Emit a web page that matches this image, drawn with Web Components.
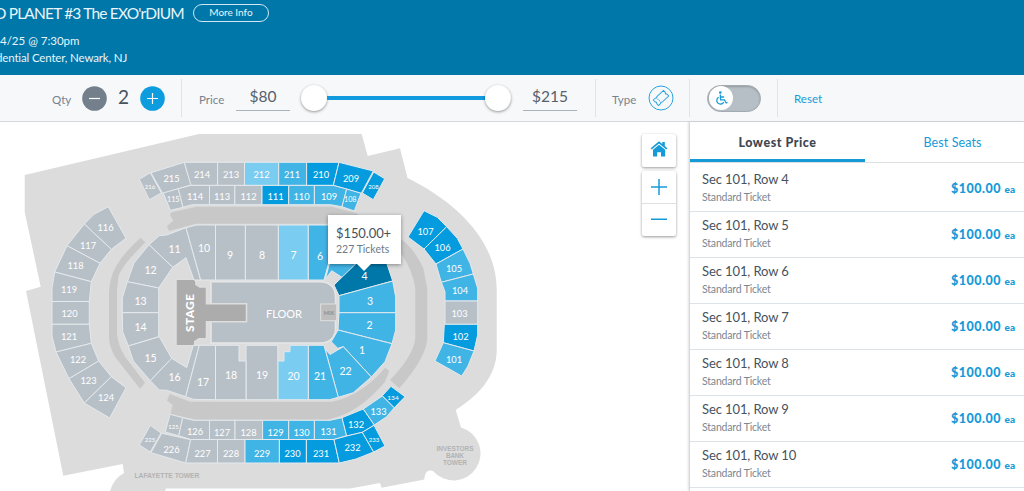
<!DOCTYPE html>
<html lang="en">
<head>
<meta charset="utf-8">
<title>Tickets</title>
<style>
	html, body {
		margin: 0;
		height: 100%;
		overflow: hidden;
		background: #fff;
		font-family: Lato, "Open Sans", sans-serif;
		color: #47525d;
	}
</style>
</head>
<body>
<ticket-page></ticket-page>

<script>
const define = (name, html, setup) => {
	const template = document.createElement('template');
	template.innerHTML = html;
	window.customElements.define(name, class extends HTMLElement {
		constructor() {
			super();
			this.attachShadow({ mode: 'open' });
			this.shadowRoot.appendChild(template.content.cloneNode(true));
		}
		connectedCallback() {
			if (setup) setup.call(this, this.shadowRoot);
		}
	});
};

define('event-header', `
	<style>
		:host {
			display: block;
			height: 75px;
			background: #0077a9;
			color: #e9f5fb;
			overflow: hidden;
			white-space: nowrap;
		}
		.title {
			display: flex;
			align-items: center;
			height: 18px;
			padding-top: 4px;
			margin-left: -6px;
			font-size: 15.5px;
			letter-spacing: -0.82px;
		}
		.more {
			box-sizing: border-box;
			width: 76px;
			height: 18px;
			margin-left: 9px;
			border: 1px solid #cfe8f4;
			border-radius: 9px;
			font-size: 10px;
			line-height: 15px;
			letter-spacing: 0;
			text-align: center;
		}
		.line {
			font-size: 11.5px;
			line-height: 17px;
		}
		.when { margin-top: 10px; }
		.where {
			margin-left: -4px;
			letter-spacing: -0.15px;
		}
	</style>
	<div class="title"><slot name="title"></slot><span class="more">More Info</span></div>
	<div class="line when"><slot name="when"></slot></div>
	<div class="line where"><slot name="where"></slot></div>
`);

define('filter-bar', `
	<style>
		:host {
			display: grid;
			grid-template-columns: 182px 414px 94px 88px 1fr;
			box-sizing: border-box;
			height: 47px;
			padding: 4px 0;
			background: #f6f8fa;
			border-bottom: 1px solid #d6dadd;
			color: #76838f;
			font-size: 11.5px;
		}
		.cell {
			display: flex;
			align-items: center;
			box-sizing: border-box;
			border-right: 1px solid #e0e4e7;
		}
		.cell:last-child { border: 0; }
		.label { padding-top: 3px; }
		.qty { padding-left: 52px; }
		.qty svg { display: block; }
		.count {
			width: 33px;
			color: #47525d;
			font-size: 19px;
			line-height: 22px;
			padding-bottom: 2px;
			text-align: center;
		}
		.price { padding-left: 17px; }
		.amount {
			box-sizing: border-box;
			width: 54px;
			height: 26px;
			border-bottom: 1px solid #a9b3bb;
			color: #56616c;
			font-size: 15.5px;
			line-height: 23px;
			text-align: center;
		}
		.slider {
			display: flex;
			align-items: center;
			width: 210px;
			margin: 0 12px 0 11px;
		}
		.knob {
			flex: none;
			width: 26px;
			height: 26px;
			border-radius: 50%;
			background: #fff;
			box-shadow: 0 1px 3px rgba(0,0,0,0.4);
		}
		.track {
			flex: 1;
			height: 4px;
			background: #119ade;
		}
		.type { padding-left: 16px; }
		.switch {
			display: flex;
			align-items: center;
			box-sizing: border-box;
			width: 54px;
			height: 27px;
			margin-left: 17px;
			padding: 1px;
			border: 1px solid #a3abb2;
			border-radius: 14px;
			background: #b7bfc6;
			box-shadow: inset 0 1px 2px rgba(0,0,0,0.2);
		}
		.thumb {
			width: 24px;
			height: 24px;
			border-radius: 50%;
			background: #fff;
		}
		.reset {
			padding-left: 16px;
			color: #169bd8;
		}
	</style>
	<div class="cell qty">
		<span class="label" style="width:30px">Qty</span>
		<svg width="25" height="25" viewBox="0 0 25 25"><circle cx="12.5" cy="12.5" r="12.3" fill="#73808b"/><path d="M7 12.5h11" stroke="#fff" stroke-width="1.2"/></svg>
		<span class="count">2</span>
		<svg width="25" height="25" viewBox="0 0 25 25"><circle cx="12.5" cy="12.5" r="12.3" fill="#0d9cde"/><path d="M7 12.5h11M12.5 7v11" stroke="#fff" stroke-width="1.2"/></svg>
	</div>
	<div class="cell price">
		<span class="label" style="width:37px">Price</span>
		<span class="amount">$80</span>
		<div class="slider"><div class="knob"></div><div class="track"></div><div class="knob"></div></div>
		<span class="amount">$215</span>
	</div>
	<div class="cell type">
		<span class="label" style="width:36px">Type</span>
		<svg width="26" height="26" viewBox="0 0 26 26" fill="none" stroke="#2ba3de">
			<circle cx="13" cy="13" r="12"/>
			<path transform="rotate(-43 13 13)" d="M6 9.200h3q.9 1.400 1.800 0H20v2.400q-1.400 1.400 0 2.800v2.400h-9.200q-.9-1.400-1.800 0H6v-2.400q1.400-1.400 0-2.800z"/>
			<path transform="rotate(-43 13 13)" d="M9.900 11.400v3.500" stroke-dasharray="1 1"/>
		</svg>
	</div>
	<div class="cell">
		<div class="switch"><div class="thumb">
			<svg width="24" height="24" viewBox="0 0 24 24" fill="none" stroke="#189bd8" stroke-width="1.300">
				<circle cx="11.300" cy="6.500" r=".7" fill="#189bd8"/>
				<path d="M11.300 8.500l.3 5.300h3.800l1.800 3.200 1.300-.6M11.600 11h3.500M9.700 11.300a3.600 3.600 0 1 0 5 4.600"/>
			</svg>
		</div></div>
	</div>
	<div class="cell reset">Reset</div>
`);

// shade -> fill
const shades = {
	n: '#b8c0c7',
	l: '#7accf0',
	m: '#41b4e6',
	d: '#049cde',
	x: '#0077a9'
};

// label, shade, polygon, label x, label y, font size
const sections = [
	['116', 'n', '108.3,206.7 126,238.3 111.3,249.3 84.3,224 94,214.3', 105.5, 227.500],
	['117', 'n', '84.3,224 111.3,249.3 100,263.3 67,245.7', 88, 245],
	['118', 'n', '67,245.7 100,263.3 91.3,281.7 54.7,272', 75.500, 265.500],
	['119', 'n', '54.7,272 91.3,281.7 89.3,301.5 52,301.5 52,288', 69, 289],
	['120', 'n', '52,301.5 89.3,301.5 89.3,324.3 52,324.3', 69.500, 313],
	['121', 'n', '52,324.3 89.3,324.3 91.3,343.3 56,352 52,336', 69, 336.500],
	['122', 'n', '56,352 91.3,343.3 98.7,361 69,378.7', 78, 359.500],
	['123', 'n', '69,378.7 98.7,361 111.3,376.7 84.3,403', 88.500, 380.500],
	['124', 'n', '84.3,403 111.3,376.7 126,387.7 109.7,418', 106, 397.500],

	['216', 'n', '139.3,179.3 150.3,172.7 161.3,193 149.3,199.7', 150, 186.500, 6],
	['215', 'n', '151,172.7 184.3,162.3 191,185 162.7,193.3', 171.500, 178.500],
	['214', 'n', '184.3,162.3 217.6,162.3 217.6,185.4 191,185.4', 202, 174],
	['213', 'n', '217.6,162.3 244.5,162.3 244.5,185.4 217.6,185.4', 231, 174.500],
	['212', 'l', '244.5,162.3 278.7,162.3 278.7,185.4 244.5,185.4', 261.500, 174.500],
	['211', 'm', '278.7,162.3 306.6,162.3 306.6,185.4 278.7,185.4', 292, 174.500],
	['210', 'd', '306.6,162.3 339,162.3 333.3,185.4 306.6,185.4', 321, 174],
	['209', 'd', '339,162.3 373.3,171 361.3,193.3 333.3,185.4', 351, 178.500],
	['208', 'd', '373.7,172 384.7,178.7 373.3,199.7 362.3,193', 373.500, 186.500, 6],
	['115', 'n', '163.3,193 178.3,188.7 183,207.3 170.3,210.3', 173.300, 199.500, 7.200],
	['114', 'n', '178.3,188.7 190.7,185.4 209.5,185.4 209.5,204.7 191.7,204.7 183,207.3', 195, 196],
	['113', 'n', '209.5,185.4 234.8,185.4 234.8,204.7 209.5,204.7', 222, 196],
	['112', 'n', '234.8,185.4 262,185.4 262,204.7 234.8,204.7', 248.500, 196],
	['111', 'd', '262,185.4 288.7,185.4 288.7,204.7 262,204.7', 275.500, 196],
	['110', 'm', '288.7,185.4 314.4,185.4 314.4,204.7 288.7,204.7', 301.500, 196.500],
	['109', 'm', '314.4,185.4 333.3,185.4 346.7,189 342,206.7 330.7,204.7 314.4,204.7', 329, 196],
	['108', 'm', '346.7,189 361,193.3 354.3,211 342,206.7', 350.300, 199.500, 7.200],

	['125', 'n', '170,414.3 182.7,417.7 178.7,435.7 165.3,432', 173.500, 426.500, 6],
	['126', 'n', '182.7,417.7 193.3,420.3 209.5,420.3 209.5,439.5 190.7,439.5 178.7,435.7', 195, 431],
	['127', 'n', '209.5,420.3 235,420.3 235,439.5 209.5,439.5', 222, 432],
	['128', 'n', '235,420.3 262.6,420.3 262.6,439.5 235,439.5', 248.500, 432],
	['129', 'm', '262.6,420.3 288.7,420.3 288.7,439.5 262.6,439.5', 275.500, 432],
	['130', 'm', '288.7,420.3 314.4,420.3 314.4,439.5 288.7,439.5', 301.500, 432],
	['131', 'm', '314.4,420.3 330,420.3 342,417.7 346.7,435.7 334,439.5 314.4,439.5', 328.500, 431],
	['132', 'd', '342,417.7 363.3,409 374.3,425 362.3,432.3 346.7,436', 356, 424],
	['133', 'm', '363.3,409 382.3,396 394.3,407.7 386.7,416.7 374.3,425', 378.500, 411.500],
	['134', 'd', '391,386.3 405,396.7 394.3,407.7 382.3,395.7', 393, 397.500, 6.500],
	['225', 'n', '150.3,425.3 161,433 150.3,452 139.3,445', 150, 439, 6],
	['226', 'n', '161.7,433.3 190.7,439.7 185.7,463 151,452.7', 171.500, 449],
	['227', 'n', '190.7,439.5 217.5,439.5 217.5,463 185.7,463', 202.500, 453],
	['228', 'n', '217.5,439.5 245,439.5 245,463 217.5,463', 231, 453],
	['229', 'm', '245,439.5 279.4,439.5 279.4,463 245,463', 262, 453],
	['230', 'd', '279.4,439.5 306.4,439.5 306.4,463 279.4,463', 292.500, 453],
	['231', 'd', '306.4,439.5 334,439.5 339.3,463 306.4,463', 321, 453],
	['232', 'd', '334,439.5 346.7,436 362.3,432.3 373.7,452 356,459 339.3,463', 352.500, 447.500],
	['233', 'd', '374,425.3 385,446 373.7,452 362.3,432.3', 374, 439.500, 6],

	['107', 'd', '424,210.7 437.3,217.3 446.7,226.7 424,249 408,237', 425.500, 231],
	['106', 'd', '446.7,226.7 457.3,238.3 463,249 436,264 424,249', 442.500, 247.500],
	['105', 'm', '463,249 470,263.3 473.3,274 441.3,282.3 436,264', 454, 268],
	['104', 'm', '473.3,274 477.7,288.3 477.7,301 445,301 445,291.7 441.3,282.3', 460, 290.500],
	['103', 'n', '445,301 477.7,301 477.7,324.3 445,324.3', 459.500, 313.500],
	['102', 'd', '444.3,324.3 477.7,324.3 477.7,335 474,351 443.3,342.7', 460.500, 336.500],
	['101', 'm', '443.3,342.7 474,351 468,366 461.7,376 435,361', 454, 359.500],

	['11', 'n', '149,244.7 159.3,235.7 166.7,235 186,227.7 200.7,280 194,280 186,257.7 172.7,267.3', 174.500, 249, 10.500],
	['12', 'n', '149,244.7 172.7,267.3 158.7,288 127.3,281.7 134,263', 150.500, 270, 10.500],
	['13', 'n', '127.3,281.7 158.7,288 158.7,312.7 122.3,312.7 122.3,298', 140.500, 300.500, 10.500],
	['14', 'n', '122.3,312.7 158.7,312.7 158.7,336.700 128.3,346 122.7,331.7', 140.500, 327, 10.500],
	['15', 'n', '159.3,336.7 171.7,358.3 150.3,380.7 133.3,361 128.3,346', 150.500, 358, 10.500],
	['16', 'n', '171.7,358.3 186.7,367.7 193.3,345.3 199.3,345.3 185.7,396.7 166.7,390.3 159.3,390 150.3,380.7', 174.500, 377, 10.500],
	['10', 'n', '186,227.7 196.7,225 215.5,225 215.5,280 200.7,280', 204, 248, 10.500],
	['9', 'n', '215.5,225 245.4,225 245.4,280 215.5,280', 230, 255, 10.500],
	['8', 'n', '245.4,225 278.4,225 278.4,280 245.4,280', 262, 255, 10.500],
	['7', 'l', '278.4,225 308.3,225 308.3,280 278.4,280', 293.500, 255, 10.500],
	['6', 'm', '308.3,225 329.3,225 338.3,228 324,280 308.3,280', 320, 255.500, 10.500],
	['', 'm', '338.3,228 357,236 371.3,248 343,278 331.7,270.7 325.500,279', 0, 0],
	['4', 'x', '334,285 371,249 380,255 387,264 392.7,281 339,295.7', 364.500, 275.500, 10.500],
	['3', 'm', '339,295.7 392.7,281 395.7,297 395.7,312.7 339,312.7', 370, 301, 10.500],
	['2', 'm', '339,312.7 395.7,312.7 395.7,330 392,343.7 338,330', 369.500, 325, 10.500],
	['1', 'm', '338,330 392,343.7 385,361.7 371.3,377 343.3,346.7 337.7,348.3 331.3,341.7', 362, 350, 10.500],
	['22', 'm', '343.3,346.7 371.3,377 353.3,392.7 338.3,397.3 325,349 330,354.5', 345.500, 370.500, 10.500],
	['21', 'm', '308.3,345.3 324,345.3 338.3,397.3 329.3,399.7 308.3,399.7', 320, 375.500, 10.500],
	['20', 'l', '290,345.3 308.3,345.3 308.3,399.7 277.8,399.7 277.8,361 284,361 284,351.7 290,351.7', 293.500, 375.500, 10.500],
	['19', 'n', '246,345.3 277.8,345.3 277.8,399.7 246,399.7', 262, 375, 10.500],
	['18', 'n', '215.5,345.3 239,345.3 239,361 246,361 246,399.7 215.5,399.7', 231, 375, 10.500],
	['17', 'n', '199.3,345.3 215.5,345.3 215.5,399.7 193.3,399.3 185.7,396.7', 203, 381.500, 10.500]
];

define('seat-map', `
	<style>
		:host {
			display: block;
			position: relative;
			overflow: hidden;
		}
		svg { display: block; }
		.section {
			stroke: #e3e9ed;
			stroke-width: 1;
		}
		text {
			text-anchor: middle;
			dominant-baseline: central;
			font-family: Lato, sans-serif;
			fill: #fff;
		}
		.tower {
			fill: #b3b3b3;
			font-family: "Liberation Sans", sans-serif;
			font-weight: bold;
		}
		::slotted(map-tooltip) {
			position: absolute;
			left: 328px;
			top: 93px;
		}
		::slotted(map-controls) {
			position: absolute;
			left: 642px;
			top: 12px;
		}
	</style>
	<svg width="689" height="369" viewBox="0 122 689 369">
		<path fill="#dcdcdc" d="M24.700 175L199 134H361.700L367.700 156 400 148.300 407.500 178C456 202 496.700 240 496.700 290V350C496.700 378 476 397 455.700 410L461 427.500A27 27 0 1 1 433 471Q425 468 424.300 479.500L381.700 487.700 380 483 350 488.500H166L165 491H110Q114 478 124 473L122.700 464 63.300 475.700 26 291 40.700 286.700 24.700 212Z"/>
		<g fill="#c8c8c8">
			<path d="M140.700 237.700L145.300 242.300C132 256 122 266 118.300 276.700L117 291.700V333.300Q118 346 125 356.700L145 382.700 140 388.700 115 356.700Q109 346 109 336.700V291.700Q110 278 115 268.300C122 256 130 247 140.700 237.700Z"/>
			<path d="M171.700 212.300L196.700 206.700H331.700L356 213 385 230V250L361 234 330 223.700H196L169 231 167 226 173.300 220.700 170 215Z"/>
			<path d="M169.700 394L190 401.700H331.700C352 398 372 384 385 367.700L389.300 371 385 381.700Q364 407 340 416L328 419.700H196L170.500 414 172.700 405 167 400.700Z"/>
			<path d="M400 238.300Q414 248 423.300 268.300L427.200 288V340Q425 359 399.300 388.300L390 380Q415 354 415.300 336.700V288Q412 266 396 247Z"/>
		</g>
		<path fill="#b8c0c7" stroke="#e6e6e6" stroke-width="1.500" d="M211 281.700H321Q335.500 283 335.500 297V330Q334 342 321 343H211Z"/>
		<path fill="#acacac" stroke="#dedede" stroke-width="1.500" d="M176 279.300H194.700Q196 280 196 284.500L200 287H206.500V303.700H246.500V321.700H206.500V338.700H199L194.700 341.700V345.700H176Z"/>
		<rect x="320.700" y="304" width="16" height="16.700" fill="#bdbdbd" stroke="#e0e0e0"/>
		<g id="sections"></g>
		<text x="284" y="313.500" font-size="11" textLength="36">FLOOR</text>
		<text x="329" y="312.700" style="font-size:5.500px;fill:#8f8f8f;font-weight:bold">MIX</text>
		<text transform="translate(189.500 313) rotate(-90)" font-size="12" font-weight="900" textLength="38">STAGE</text>
		<text class="tower" x="167" y="475" font-size="6.800" textLength="65">LAFAYETTE TOWER</text>
		<text class="tower" x="455" y="448.500" font-size="6.500" textLength="37">INVESTORS</text>
		<text class="tower" x="455" y="455.500" font-size="6.500" textLength="18">BANK</text>
		<text class="tower" x="455" y="462.200" font-size="6.500" textLength="24">TOWER</text>
	</svg>
	<slot></slot>
`, function(root) {
	root.querySelector('#sections').innerHTML = sections.map(([label, shade, points, x, y, size = 9.3]) =>
		`<polygon class="section" points="${points}" fill="${shades[shade]}"/>` +
		(label ? `<text x="${x}" y="${y}" font-size="${size}">${label}</text>` : '')
	).join('');
});

define('map-tooltip', `
	<style>
		:host {
			box-sizing: border-box;
			width: 73px;
			height: 49px;
			padding: 9px 0 0 8px;
			background: #fff;
			box-shadow: 0 1px 4px rgba(0,0,0,0.4);
			white-space: nowrap;
		}
		.price {
			font-size: 13px;
			line-height: 18px;
			letter-spacing: -0.1px;
		}
		.count {
			color: #6d7a87;
			font-size: 10.5px;
			line-height: 14px;
		}
		.tip {
			position: absolute;
			left: 28px;
			top: 48px;
			border: 8px solid transparent;
			border-top-color: #fff;
			border-bottom: 0;
		}
	</style>
	<div class="price"><slot name="price"></slot></div>
	<div class="count"><slot></slot></div>
	<div class="tip"></div>
`);

define('map-controls', `
	<style>
		:host {
			display: flex;
			flex-direction: column;
			gap: 4px;
			width: 34px;
		}
		.box {
			border-radius: 2px;
			background: #fff;
			box-shadow: 0 1px 3px rgba(0,0,0,0.4);
		}
		svg {
			display: block;
		}
	</style>
	<div class="box"><svg width="34" height="33" viewBox="0 0 34 33" fill="#179bd8">
		<path d="M8.700 14.300L17 7.300l3.300 2.700V8h2.500v4.100l2.600 2.200-1 1.200L17 9.400 9.700 15.500z"/>
		<path d="M11 15.800l6-5 6.200 5V22.500h-4.200v-4.200h-3.800V22.500H11z"/>
	</svg></div>
	<div class="box"><svg width="34" height="65" viewBox="0 0 34 65" stroke="#179bd8" stroke-width="1.500">
		<path d="M9 16h16M17 8v16M9 48.300h16"/>
		<path d="M0 32.500h34" stroke="#e0e0e0" stroke-width="1"/>
	</svg></div>
`);

define('ticket-row', `
	<style>
		:host {
			display: flex;
			justify-content: space-between;
			align-items: center;
			box-sizing: border-box;
			flex: none;
			height: 46px;
			padding: 0 9px 0 12px;
			border-bottom: 1px solid #dde2e6;
			white-space: nowrap;
		}
		.seat {
			font-size: 13px;
			line-height: 19px;
			letter-spacing: -0.1px;
		}
		.kind {
			padding-bottom: 2px;
			color: #7a8794;
			font-size: 10.5px;
			line-height: 17px;
			letter-spacing: -0.18px;
		}
		.price {
			color: #159ad8;
			font-size: 12.5px;
			font-weight: 900;
			letter-spacing: 0.5px;
		}
		.price small {
			font-size: 10px;
			letter-spacing: 0;
		}
	</style>
	<div>
		<div class="seat"><slot></slot></div>
		<div class="kind">Standard Ticket</div>
	</div>
	<div class="price">$100.00 <small>ea</small></div>
`);

define('ticket-list', `
	<style>
		:host {
			display: flex;
			flex-direction: column;
			box-sizing: border-box;
			border-left: 1px solid #d3d9dd;
			box-shadow: -1px 0 2px rgba(0,0,0,0.12);
			background: #fff;
			overflow: hidden;
		}
		.tabs {
			display: flex;
			flex: none;
			height: 40px;
			margin-bottom: 3px;
			border-bottom: 1px solid #dde0e2;
			font-size: 12.5px;
			line-height: 41px;
			text-align: center;
			color: #159ad8;
		}
		.tab {
			box-sizing: border-box;
			flex: 0 0 175px;
			height: 40px;
			letter-spacing: 0.1px;
		}
		.active {
			border-bottom: 3px solid #159ad8;
			color: #3c4650;
			font-weight: 900;
			letter-spacing: 0.55px;
		}
	</style>
	<div class="tabs"><div class="tab active">Lowest Price</div><div class="tab">Best Seats</div></div>
	<slot></slot>
`);

define('ticket-page', `
	<style>
		:host {
			display: flex;
			flex-direction: column;
			height: 491px;
			width: 1024px;
			overflow: hidden;
		}
		main {
			display: grid;
			grid-template-columns: 689px 335px;
			height: 369px;
		}
	</style>
	<event-header>
		<span slot="title">O PLANET #3 The EXO'rDIUM</span>
		<span slot="when">4/25 @ 7:30pm</span>
		<span slot="where">dential Center, Newark, NJ</span>
	</event-header>
	<filter-bar></filter-bar>
	<main>
		<seat-map>
			<map-tooltip><span slot="price">$150.00+</span>227 Tickets</map-tooltip>
			<map-controls></map-controls>
		</seat-map>
		<ticket-list>
			<ticket-row>Sec 101, Row 4</ticket-row>
			<ticket-row>Sec 101, Row 5</ticket-row>
			<ticket-row>Sec 101, Row 6</ticket-row>
			<ticket-row>Sec 101, Row 7</ticket-row>
			<ticket-row>Sec 101, Row 8</ticket-row>
			<ticket-row>Sec 101, Row 9</ticket-row>
			<ticket-row>Sec 101, Row 10</ticket-row>
		</ticket-list>
	</main>
`);
</script>
</body>
</html>
